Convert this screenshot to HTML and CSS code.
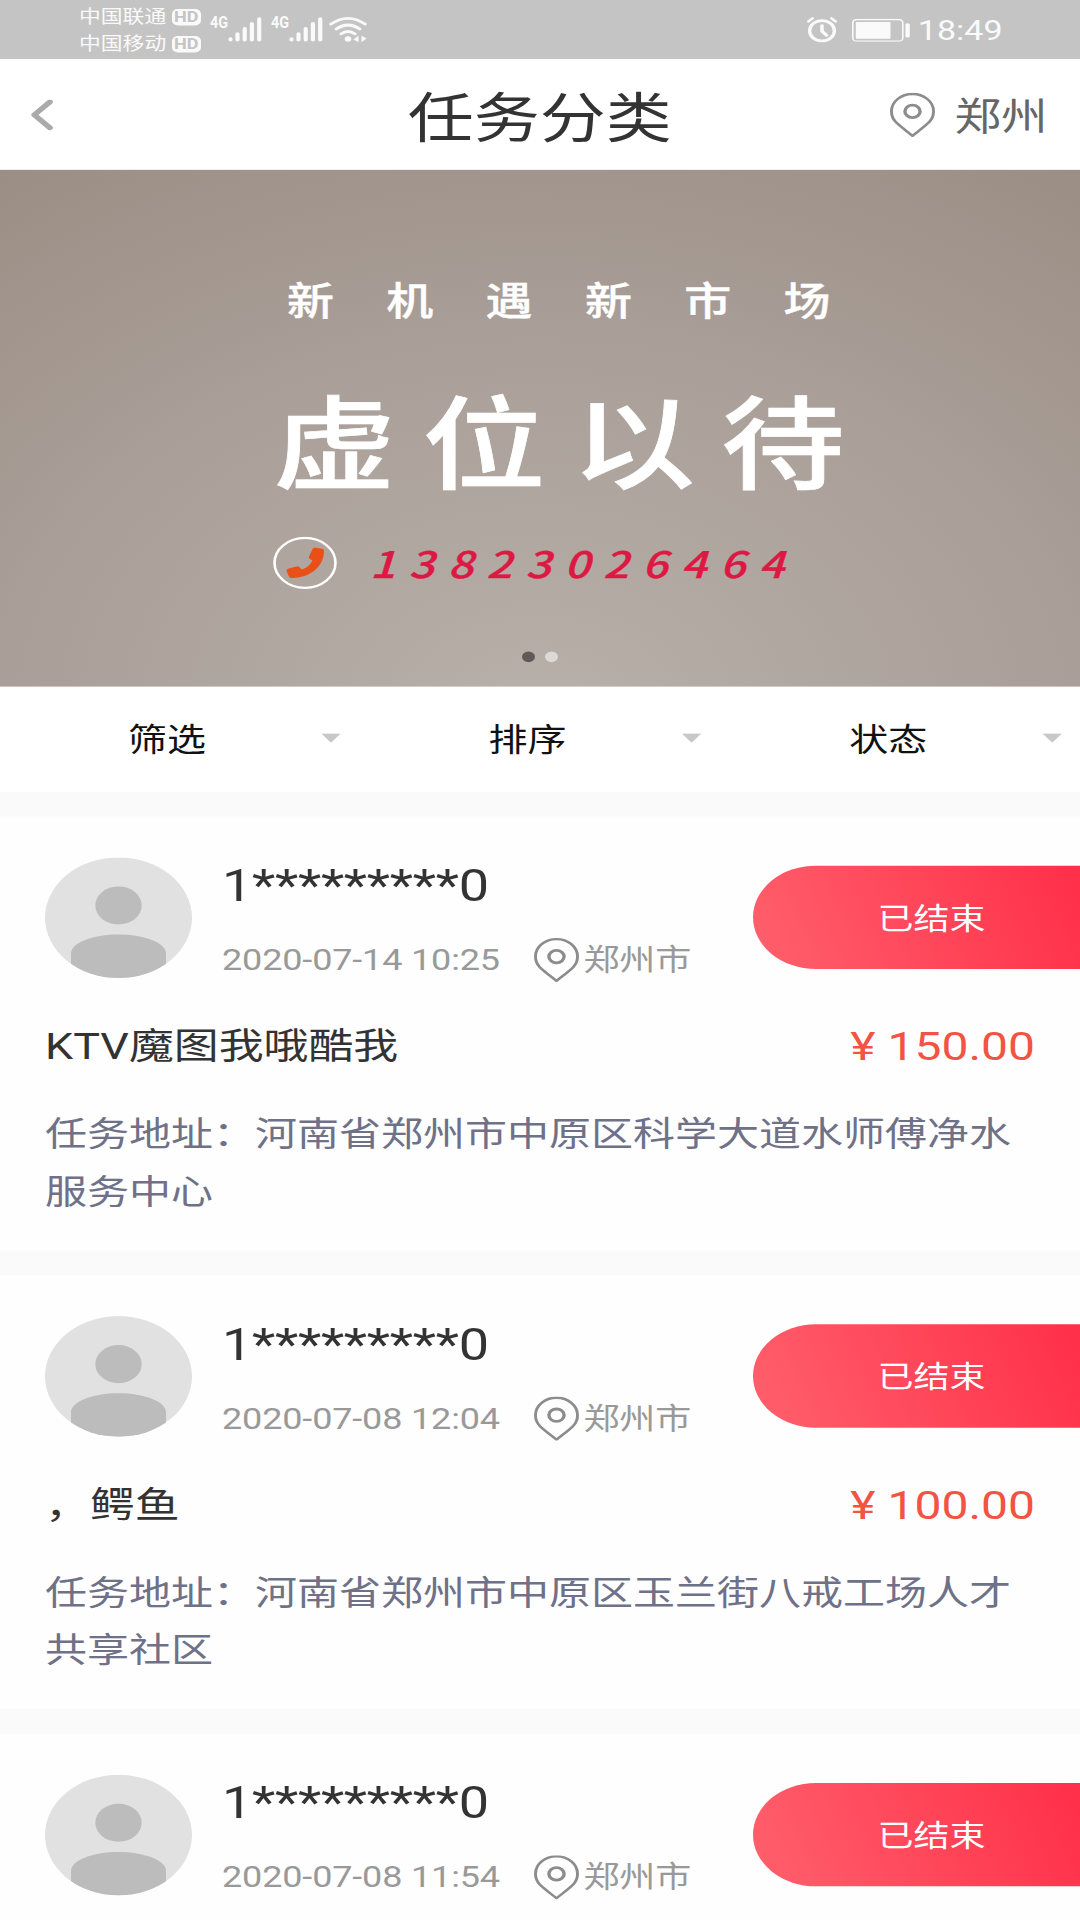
FILE: index.html
```html
<!DOCTYPE html>
<html lang="zh-CN">
<head>
<meta charset="utf-8">
<title>任务分类</title>
<link rel="stylesheet" href="styles.css">
</head>
<body>
<svg class="defs" width="0" height="0" aria-hidden="true">
  <symbol id="pin" viewBox="0 0 45 54">
    <path d="M22.500 52.500C17 47 10.500 41.500 5.800 35.800A21.200 21.200 0 0 1 1.500 22.500A21 21 0 0 1 43.500 22.500A21.200 21.200 0 0 1 39.200 35.800C34.500 41.500 28 47 22.500 52.500Z" fill="none" stroke="currentColor" stroke-width="2.900" stroke-linejoin="round"/>
    <circle cx="22.500" cy="22.800" r="7.600" fill="none" stroke="currentColor" stroke-width="3.400"/>
  </symbol>
  <symbol id="signal" viewBox="0 0 34 32">
    <g stroke="currentColor" stroke-width="4.200" stroke-linecap="round">
      <path d="M2.500 27.500v1M9.500 21.500v7M16.700 15v13.500M23.900 8.900v19.600M31.200 3.200v25.300"/>
    </g>
  </symbol>
  <symbol id="avatar" viewBox="0 0 147 147">
    <clipPath id="disc"><circle cx="73.500" cy="73.500" r="73.500"/></clipPath>
    <g clip-path="url(#disc)">
      <rect width="147" height="147" fill="#e1e1e1"/>
      <circle cx="73.500" cy="58.500" r="23.200" fill="#bcbcbc"/>
      <path d="M26 147v-30C26 104 48 94 73.500 94S121 104 121 117v30z" fill="#bcbcbc"/>
    </g>
  </symbol>
</svg>

<div class="screen">
  <div class="statusbar">
    <div class="carriers">
      <div class="carrier">中国联通<span class="hd">HD</span></div>
      <div class="carrier">中国移动<span class="hd">HD</span></div>
    </div>
    <div class="cell"><span class="net">4G</span><svg class="bars"><use href="#signal"/></svg></div>
    <div class="cell"><span class="net">4G</span><svg class="bars"><use href="#signal"/></svg></div>
    <svg class="wifi" viewBox="0 0 38 32" fill="none" stroke="currentColor" stroke-width="3.400" stroke-linecap="round">
      <path d="M2 9.300Q19 -4.500 36 9.300M7.300 15.300Q19 5.500 30.700 15.300M12.200 21.200Q19 15.500 25.800 21.200"/>
      <circle cx="19" cy="27.500" r="3.300" fill="currentColor" stroke="none"/>
      <path d="M29.500 23.500v8l-5-3.500zM32.500 23.500v8l5-4.500z" fill="currentColor" stroke="none"/>
    </svg>
    <div class="status-right">
      <svg class="alarm" viewBox="0 0 30 32" fill="none" stroke="currentColor" stroke-linecap="round">
        <circle cx="15" cy="17.500" r="12.400" stroke-width="3.400"/>
        <path d="M15 11.500v6.500l4.500 5" stroke-width="3.600"/>
        <path d="M1.500 6l4-3.700M28.500 6l-4-3.700" stroke-width="3"/>
      </svg>
      <svg class="battery" viewBox="0 0 58 28">
        <rect x=".8" y=".8" width="50" height="26.400" rx="4" fill="none" stroke="currentColor" stroke-width="1.600"/>
        <rect x="3.800" y="3.800" width="34.700" height="20.400" rx="1" fill="currentColor"/>
        <rect x="53.400" y="5.300" width="4.400" height="17.500" rx="2" fill="currentColor"/>
      </svg>
      <span class="time">18:49</span>
    </div>
  </div>

  <div class="navbar">
    <svg class="back" viewBox="0 0 22 38"><path d="M18.800 3.400L3.300 19L18.800 34.600" fill="none" stroke="#aaa" stroke-width="6" stroke-linecap="round" stroke-linejoin="round"/></svg>
    <h1 class="title">任务分类</h1>
    <div class="location"><svg class="pin"><use href="#pin"/></svg><span class="place">郑州</span></div>
  </div>

  <div class="banner">
    <p class="slogan">新机遇新市场</p>
    <p class="headline">虚位以待</p>
    <div class="contact">
      <svg class="phone" viewBox="0 0 64 64">
        <circle cx="32" cy="32" r="30.500" fill="none" stroke="#fff" stroke-width="2.600"/>
        <path d="M40 14.200Q41 13.300 42.500 13.600L49 14.800Q51 15.200 51 17C51 37 37 50.500 18.500 50.500Q16.500 50.500 16 48.500L13.500 42Q13 40 15 39.200L23.500 36.300Q25 35.800 26.200 37L29 40.200Q36.500 36.500 39.500 29L36.500 27Q35.500 26 36 24.300Z" fill="#ea4f17"/>
      </svg>
      <span class="number">13823026464</span>
    </div>
    <div class="dots"><i class="dot active"></i><i class="dot"></i></div>
  </div>

  <div class="filters">
    <div class="filter"><span>筛选</span><i class="caret"></i></div>
    <div class="filter"><span>排序</span><i class="caret"></i></div>
    <div class="filter"><span>状态</span><i class="caret"></i></div>
  </div>

  <div class="list">
    <div class="card">
      <div class="head">
        <svg class="avatar"><use href="#avatar"/></svg>
        <div class="info">
          <div class="name">1*********0</div>
          <div class="meta"><span class="date">2020-07-14 10:25</span><svg class="pin"><use href="#pin"/></svg><span class="city">郑州市</span></div>
        </div>
        <div class="state">已结束</div>
      </div>
      <div class="summary"><span>KTV魔图我哦酷我</span><span class="price">¥ 150.00</span></div>
      <p class="address">任务地址：河南省郑州市中原区科学大道水师傅净水服务中心</p>
    </div>
    <div class="card">
      <div class="head">
        <svg class="avatar"><use href="#avatar"/></svg>
        <div class="info">
          <div class="name">1*********0</div>
          <div class="meta"><span class="date">2020-07-08 12:04</span><svg class="pin"><use href="#pin"/></svg><span class="city">郑州市</span></div>
        </div>
        <div class="state">已结束</div>
      </div>
      <div class="summary"><span>，鳄鱼</span><span class="price">¥ 100.00</span></div>
      <p class="address">任务地址：河南省郑州市中原区玉兰街八戒工场人才共享社区</p>
    </div>
    <div class="card">
      <div class="head">
        <svg class="avatar"><use href="#avatar"/></svg>
        <div class="info">
          <div class="name">1*********0</div>
          <div class="meta"><span class="date">2020-07-08 11:54</span><svg class="pin"><use href="#pin"/></svg><span class="city">郑州市</span></div>
        </div>
        <div class="state">已结束</div>
      </div>
    </div>
  </div>
</div>
</body>
</html>
```
FILE: styles.css
```css
* { box-sizing: border-box; margin: 0; padding: 0; }

html, body { width: 1080px; height: 1920px; overflow: hidden; background: #fff; }

body { font-family: Roboto, "Noto Sans CJK SC", sans-serif; color: #333; }

svg { display: block; flex: none; }
.defs { position: absolute; }

/* The 1080x2340 layout is fitted to a 1920px high window. */
.screen {
  display: flex;
  flex-direction: column;
  width: 1080px;
  height: 2340px;
  margin-bottom: -420px;
  overflow: hidden;
  background: #fafafa;
  transform: scaleY(.820513);
  transform-origin: 0 0;
}

/* status bar */
.statusbar {
  display: flex;
  flex: none;
  height: 72px;
  padding: 0 77.500px 0 79px;
  background: #c4c4c4;
  color: #fafafa;
}
.carriers { display: flex; flex-direction: column; padding-top: 4px; }
.carrier { display: flex; align-items: center; height: 33px; font-size: 21.800px; line-height: 33px; }
.hd {
  width: 29px;
  height: 20px;
  margin-left: 5.500px;
  border-radius: 6px;
  background: #fafafa;
  color: #c4c4c4;
  font-size: 18px;
  font-weight: 700;
  line-height: 20px;
  text-align: center;
}
.cell { display: flex; width: 61px; padding: 20px 0 0 9.500px; }
.net { width: 18px; font-size: 20px; font-weight: 700; line-height: 15px; transform: scaleX(.72); transform-origin: 0 0; }
.bars { width: 34px; height: 32px; }
.wifi { width: 38px; height: 32px; margin: 20px 0 0 6.500px; }
.status-right { display: flex; align-items: center; margin-left: auto; }
.alarm { width: 30px; height: 32px; }
.battery { width: 58px; height: 28px; margin: 1px 8px 0 15px; }
.time { font-size: 34px; line-height: 40px; padding-top: 2px; }

/* navigation bar */
.navbar {
  display: grid;
  flex: none;
  grid-template-columns: 1fr auto 1fr;
  align-items: center;
  height: 135px;
  padding: 0 32.500px 0 31px;
  background: #fff;
}
.back { width: 22px; height: 38px; }
.title { padding: 12px 0 0 1px; font-size: 66px; font-weight: 400; line-height: 90px; }
.location { display: flex; align-items: center; justify-content: flex-end; gap: 20px; color: #666; font-size: 46.500px; line-height: 60px; }
.place { padding-top: 6px; }
.pin { width: 45px; height: 54px; color: #8c8c8c; }

/* banner */
.banner {
  flex: none;
  height: 630px;
  padding: 123px 0 0 273px;
  background: radial-gradient(980px 860px at 50% 106%, #b9b0aa 0%, #a99e98 55%, #998c82 100%);
  font-family: "Noto Sans CJK SC", sans-serif;
  color: #fff;
}
.slogan { padding-left: 14px; font-size: 47px; font-weight: 500; line-height: 68px; letter-spacing: 52.300px; -webkit-text-stroke: .5px #fff; }
.headline { margin-top: 46px; font-size: 123px; font-weight: 500; line-height: 176px; letter-spacing: 26.500px; -webkit-text-stroke: .8px #fff; }
.contact { display: flex; align-items: center; height: 64px; margin-top: 34px; }
.phone { width: 64px; height: 64px; }
.number { margin: -3px 0 0 33px; color: #dc1843; font-size: 44.500px; font-weight: 500; font-style: italic; line-height: 64px; letter-spacing: 13.500px; -webkit-text-stroke: .5px #dc1843; }
.dots { display: flex; gap: 10px; margin: 76px 0 0 249px; }
.dot { width: 13px; height: 13px; border-radius: 50%; background: #ddd9d7; }
.dot.active { background: #5f5a57; }

/* filters */
.filters { display: flex; flex: none; height: 128px; background: #fff; color: #111; }
.filter { display: flex; flex: none; align-items: center; width: 360.600px; padding: 2px 0 0 128px; font-size: 39px; line-height: 60px; }
.filter:last-child { width: 358px; }
.caret { width: 20px; height: 11.500px; margin: -5px 0 0 115px; background: #c8c8c8; clip-path: polygon(0 0, 100% 0, 50% 100%); }

/* task list */
.list { display: flex; flex: 1; flex-direction: column; gap: 30px; min-height: 0; padding-top: 30px; }
.card { flex: none; height: 529.200px; padding: 50px 0 0 45px; background: #fefefe; }
.card:last-child { flex: 1; height: auto; min-height: 0; }
.head { display: flex; }
.avatar { width: 147px; height: 147px; }
.info { margin-left: 30px; }
.name { padding-top: 1px; font-size: 54px; line-height: 68px; letter-spacing: -.300px; }
.meta { display: flex; align-items: center; margin-top: 28.500px; color: #999; font-size: 36px; line-height: 54px; letter-spacing: -.150px; }
.meta .pin { margin: 0 4px 0 34.500px; }
.state {
  width: 327px;
  height: 125.500px;
  margin: 10px 0 0 auto;
  padding-left: 30px;
  border-radius: 63px 0 0 63px;
  background: linear-gradient(70deg, #ff606d, #ff2f48);
  color: #fff;
  font-size: 36px;
  line-height: 131px;
  text-align: center;
}
.summary { display: flex; justify-content: space-between; margin: 46px 45px 0 0; font-size: 44.900px; line-height: 66px; }
.price { color: #f25343; font-size: 48px; padding-top: 1px; line-height: 64px; }
.address { margin: 39.500px 45px 0 0; color: #6e7187; font-size: 42px; line-height: 70px; }
```
